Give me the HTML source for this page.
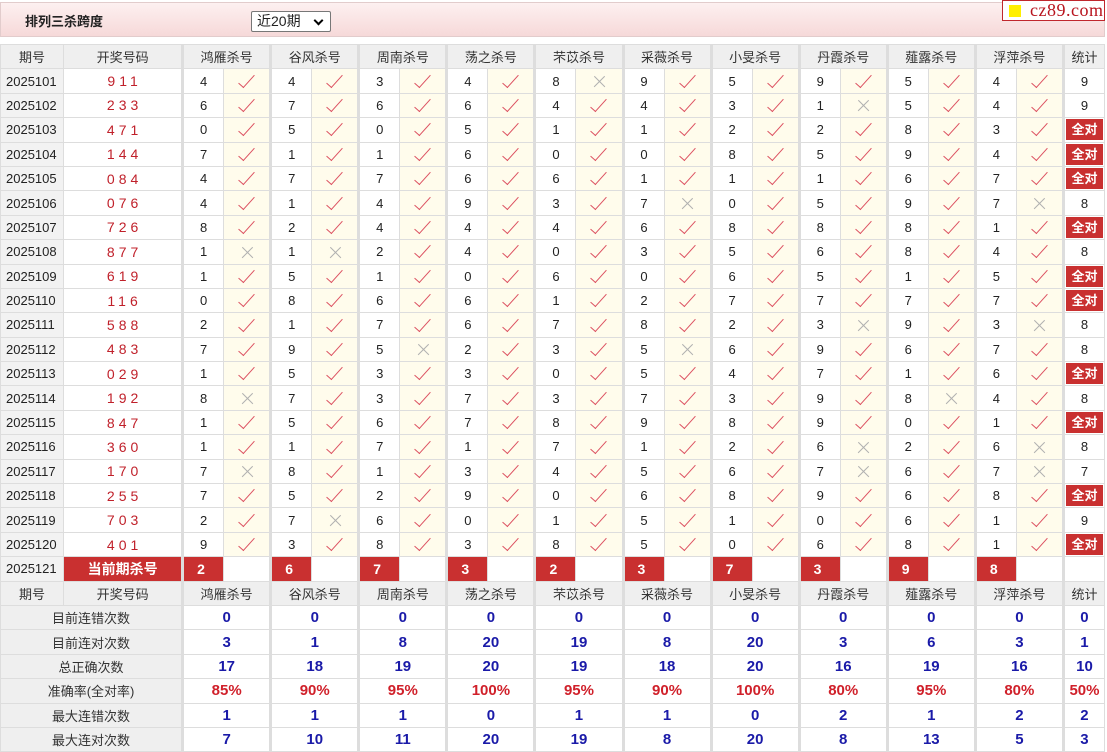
<!DOCTYPE html>
<html><head><meta charset="utf-8">
<style>
*{margin:0;padding:0;box-sizing:border-box}
body{width:1107px;height:752px;overflow:hidden;background:#fff;font-family:"Liberation Sans","Noto Sans CJK SC",sans-serif;font-size:13px;color:#222;position:relative}
.top{position:absolute;left:0;top:2px;width:1105px;height:35px;background:linear-gradient(#fdf0f0,#f6d9d9);border:1px solid #e2cccc}
.top .t{position:absolute;left:24px;top:8px;font-weight:bold;font-size:13px;color:#222}
.sel{position:absolute;left:250px;top:8px;width:80px;height:21px;border:1px solid #777;background:#fff;font-size:14px;padding-left:5px;line-height:19px;border-radius:2px}
.sel:after{content:"";position:absolute;right:8px;top:5px;width:5px;height:5px;border-right:2px solid #000;border-bottom:2px solid #000;transform:rotate(45deg)}
.logo{position:absolute;left:1002px;top:0;width:103px;height:21px;border:1px solid #c0272d;background:#fff;font-family:"Liberation Serif",serif;font-size:18px;color:#b8141e;line-height:19px;padding-left:27px;letter-spacing:0.5px}
.logo:before{content:"";position:absolute;left:6px;top:4px;width:12px;height:12px;background:#ffef00}
table{position:absolute;left:0;top:44px;border-collapse:collapse;table-layout:fixed;width:1105px}
td{border:1px solid #ddd;height:24.4px;text-align:center;padding:0;white-space:nowrap;overflow:hidden}
tr.h td{background:#efefef;font-size:13px;color:#333}
td.q{background:#f2f2f2;text-align:left;padding-left:5px}
td.k{color:#c0202a;letter-spacing:4px;font-size:14px;padding-left:4px}
td.n{border-left:3px solid #ddd}
td.y{background:#fffcec;position:relative}
td.g{border-left:3px solid #ddd}
.v{display:inline-block;width:7px;height:17px;border-right:1.6px solid #dc5060;border-bottom:1.6px solid #dc5060;transform:rotate(42deg);margin-top:-6px;vertical-align:middle}
.x{display:inline-block;width:14px;height:14px;position:relative;vertical-align:middle}
.x:before,.x:after{content:"";position:absolute;left:0;top:6px;width:15px;height:1.3px;background:#b0b0b0;transform:rotate(45deg)}
.x:after{transform:rotate(-45deg)}
.a{display:block;margin:1px 1px;height:21px;line-height:21px;background:#c93030;color:#fff;font-weight:bold;font-size:13px}
td.r{background:#c93030;color:#fff;font-weight:bold;font-size:14px}
td.r2{background:#c93030;color:#fff;font-weight:bold;font-size:14px;text-align:left;padding-left:13px}
td.l{background:#efefef;color:#333}
td.b{color:#1a1aa8;font-weight:bold;font-size:15px}
td.p{color:#d0202a;font-weight:bold;font-size:15px}
</style></head><body>
<div class="top"><span class="t">排列三杀跨度</span><div class="sel">近20期</div></div>
<div class="logo">cz89.com</div>
<table>
<colgroup><col style="width:63px"><col style="width:119px"><col style="width:41px"><col style="width:47px"><col style="width:41px"><col style="width:47px"><col style="width:41px"><col style="width:47px"><col style="width:41px"><col style="width:47px"><col style="width:41px"><col style="width:47px"><col style="width:41px"><col style="width:47px"><col style="width:41px"><col style="width:47px"><col style="width:41px"><col style="width:47px"><col style="width:41px"><col style="width:47px"><col style="width:41px"><col style="width:47px"><col style="width:41px"></colgroup>
<tr class="h"><td>期号</td><td>开奖号码</td><td colspan="2" class="g">鸿雁杀号</td><td colspan="2" class="g">谷风杀号</td><td colspan="2" class="g">周南杀号</td><td colspan="2" class="g">荡之杀号</td><td colspan="2" class="g">芣苡杀号</td><td colspan="2" class="g">采薇杀号</td><td colspan="2" class="g">小旻杀号</td><td colspan="2" class="g">丹霞杀号</td><td colspan="2" class="g">薤露杀号</td><td colspan="2" class="g">浮萍杀号</td><td class="g">统计</td></tr>
<tr><td class="q">2025101</td><td class="k">911</td><td class="n">4</td><td class="y"><i class="v"></i></td><td class="n">4</td><td class="y"><i class="v"></i></td><td class="n">3</td><td class="y"><i class="v"></i></td><td class="n">4</td><td class="y"><i class="v"></i></td><td class="n">8</td><td class="y"><i class="x"></i></td><td class="n">9</td><td class="y"><i class="v"></i></td><td class="n">5</td><td class="y"><i class="v"></i></td><td class="n">9</td><td class="y"><i class="v"></i></td><td class="n">5</td><td class="y"><i class="v"></i></td><td class="n">4</td><td class="y"><i class="v"></i></td><td class="g">9</td></tr>
<tr><td class="q">2025102</td><td class="k">233</td><td class="n">6</td><td class="y"><i class="v"></i></td><td class="n">7</td><td class="y"><i class="v"></i></td><td class="n">6</td><td class="y"><i class="v"></i></td><td class="n">6</td><td class="y"><i class="v"></i></td><td class="n">4</td><td class="y"><i class="v"></i></td><td class="n">4</td><td class="y"><i class="v"></i></td><td class="n">3</td><td class="y"><i class="v"></i></td><td class="n">1</td><td class="y"><i class="x"></i></td><td class="n">5</td><td class="y"><i class="v"></i></td><td class="n">4</td><td class="y"><i class="v"></i></td><td class="g">9</td></tr>
<tr><td class="q">2025103</td><td class="k">471</td><td class="n">0</td><td class="y"><i class="v"></i></td><td class="n">5</td><td class="y"><i class="v"></i></td><td class="n">0</td><td class="y"><i class="v"></i></td><td class="n">5</td><td class="y"><i class="v"></i></td><td class="n">1</td><td class="y"><i class="v"></i></td><td class="n">1</td><td class="y"><i class="v"></i></td><td class="n">2</td><td class="y"><i class="v"></i></td><td class="n">2</td><td class="y"><i class="v"></i></td><td class="n">8</td><td class="y"><i class="v"></i></td><td class="n">3</td><td class="y"><i class="v"></i></td><td class="g"><span class="a">全对</span></td></tr>
<tr><td class="q">2025104</td><td class="k">144</td><td class="n">7</td><td class="y"><i class="v"></i></td><td class="n">1</td><td class="y"><i class="v"></i></td><td class="n">1</td><td class="y"><i class="v"></i></td><td class="n">6</td><td class="y"><i class="v"></i></td><td class="n">0</td><td class="y"><i class="v"></i></td><td class="n">0</td><td class="y"><i class="v"></i></td><td class="n">8</td><td class="y"><i class="v"></i></td><td class="n">5</td><td class="y"><i class="v"></i></td><td class="n">9</td><td class="y"><i class="v"></i></td><td class="n">4</td><td class="y"><i class="v"></i></td><td class="g"><span class="a">全对</span></td></tr>
<tr><td class="q">2025105</td><td class="k">084</td><td class="n">4</td><td class="y"><i class="v"></i></td><td class="n">7</td><td class="y"><i class="v"></i></td><td class="n">7</td><td class="y"><i class="v"></i></td><td class="n">6</td><td class="y"><i class="v"></i></td><td class="n">6</td><td class="y"><i class="v"></i></td><td class="n">1</td><td class="y"><i class="v"></i></td><td class="n">1</td><td class="y"><i class="v"></i></td><td class="n">1</td><td class="y"><i class="v"></i></td><td class="n">6</td><td class="y"><i class="v"></i></td><td class="n">7</td><td class="y"><i class="v"></i></td><td class="g"><span class="a">全对</span></td></tr>
<tr><td class="q">2025106</td><td class="k">076</td><td class="n">4</td><td class="y"><i class="v"></i></td><td class="n">1</td><td class="y"><i class="v"></i></td><td class="n">4</td><td class="y"><i class="v"></i></td><td class="n">9</td><td class="y"><i class="v"></i></td><td class="n">3</td><td class="y"><i class="v"></i></td><td class="n">7</td><td class="y"><i class="x"></i></td><td class="n">0</td><td class="y"><i class="v"></i></td><td class="n">5</td><td class="y"><i class="v"></i></td><td class="n">9</td><td class="y"><i class="v"></i></td><td class="n">7</td><td class="y"><i class="x"></i></td><td class="g">8</td></tr>
<tr><td class="q">2025107</td><td class="k">726</td><td class="n">8</td><td class="y"><i class="v"></i></td><td class="n">2</td><td class="y"><i class="v"></i></td><td class="n">4</td><td class="y"><i class="v"></i></td><td class="n">4</td><td class="y"><i class="v"></i></td><td class="n">4</td><td class="y"><i class="v"></i></td><td class="n">6</td><td class="y"><i class="v"></i></td><td class="n">8</td><td class="y"><i class="v"></i></td><td class="n">8</td><td class="y"><i class="v"></i></td><td class="n">8</td><td class="y"><i class="v"></i></td><td class="n">1</td><td class="y"><i class="v"></i></td><td class="g"><span class="a">全对</span></td></tr>
<tr><td class="q">2025108</td><td class="k">877</td><td class="n">1</td><td class="y"><i class="x"></i></td><td class="n">1</td><td class="y"><i class="x"></i></td><td class="n">2</td><td class="y"><i class="v"></i></td><td class="n">4</td><td class="y"><i class="v"></i></td><td class="n">0</td><td class="y"><i class="v"></i></td><td class="n">3</td><td class="y"><i class="v"></i></td><td class="n">5</td><td class="y"><i class="v"></i></td><td class="n">6</td><td class="y"><i class="v"></i></td><td class="n">8</td><td class="y"><i class="v"></i></td><td class="n">4</td><td class="y"><i class="v"></i></td><td class="g">8</td></tr>
<tr><td class="q">2025109</td><td class="k">619</td><td class="n">1</td><td class="y"><i class="v"></i></td><td class="n">5</td><td class="y"><i class="v"></i></td><td class="n">1</td><td class="y"><i class="v"></i></td><td class="n">0</td><td class="y"><i class="v"></i></td><td class="n">6</td><td class="y"><i class="v"></i></td><td class="n">0</td><td class="y"><i class="v"></i></td><td class="n">6</td><td class="y"><i class="v"></i></td><td class="n">5</td><td class="y"><i class="v"></i></td><td class="n">1</td><td class="y"><i class="v"></i></td><td class="n">5</td><td class="y"><i class="v"></i></td><td class="g"><span class="a">全对</span></td></tr>
<tr><td class="q">2025110</td><td class="k">116</td><td class="n">0</td><td class="y"><i class="v"></i></td><td class="n">8</td><td class="y"><i class="v"></i></td><td class="n">6</td><td class="y"><i class="v"></i></td><td class="n">6</td><td class="y"><i class="v"></i></td><td class="n">1</td><td class="y"><i class="v"></i></td><td class="n">2</td><td class="y"><i class="v"></i></td><td class="n">7</td><td class="y"><i class="v"></i></td><td class="n">7</td><td class="y"><i class="v"></i></td><td class="n">7</td><td class="y"><i class="v"></i></td><td class="n">7</td><td class="y"><i class="v"></i></td><td class="g"><span class="a">全对</span></td></tr>
<tr><td class="q">2025111</td><td class="k">588</td><td class="n">2</td><td class="y"><i class="v"></i></td><td class="n">1</td><td class="y"><i class="v"></i></td><td class="n">7</td><td class="y"><i class="v"></i></td><td class="n">6</td><td class="y"><i class="v"></i></td><td class="n">7</td><td class="y"><i class="v"></i></td><td class="n">8</td><td class="y"><i class="v"></i></td><td class="n">2</td><td class="y"><i class="v"></i></td><td class="n">3</td><td class="y"><i class="x"></i></td><td class="n">9</td><td class="y"><i class="v"></i></td><td class="n">3</td><td class="y"><i class="x"></i></td><td class="g">8</td></tr>
<tr><td class="q">2025112</td><td class="k">483</td><td class="n">7</td><td class="y"><i class="v"></i></td><td class="n">9</td><td class="y"><i class="v"></i></td><td class="n">5</td><td class="y"><i class="x"></i></td><td class="n">2</td><td class="y"><i class="v"></i></td><td class="n">3</td><td class="y"><i class="v"></i></td><td class="n">5</td><td class="y"><i class="x"></i></td><td class="n">6</td><td class="y"><i class="v"></i></td><td class="n">9</td><td class="y"><i class="v"></i></td><td class="n">6</td><td class="y"><i class="v"></i></td><td class="n">7</td><td class="y"><i class="v"></i></td><td class="g">8</td></tr>
<tr><td class="q">2025113</td><td class="k">029</td><td class="n">1</td><td class="y"><i class="v"></i></td><td class="n">5</td><td class="y"><i class="v"></i></td><td class="n">3</td><td class="y"><i class="v"></i></td><td class="n">3</td><td class="y"><i class="v"></i></td><td class="n">0</td><td class="y"><i class="v"></i></td><td class="n">5</td><td class="y"><i class="v"></i></td><td class="n">4</td><td class="y"><i class="v"></i></td><td class="n">7</td><td class="y"><i class="v"></i></td><td class="n">1</td><td class="y"><i class="v"></i></td><td class="n">6</td><td class="y"><i class="v"></i></td><td class="g"><span class="a">全对</span></td></tr>
<tr><td class="q">2025114</td><td class="k">192</td><td class="n">8</td><td class="y"><i class="x"></i></td><td class="n">7</td><td class="y"><i class="v"></i></td><td class="n">3</td><td class="y"><i class="v"></i></td><td class="n">7</td><td class="y"><i class="v"></i></td><td class="n">3</td><td class="y"><i class="v"></i></td><td class="n">7</td><td class="y"><i class="v"></i></td><td class="n">3</td><td class="y"><i class="v"></i></td><td class="n">9</td><td class="y"><i class="v"></i></td><td class="n">8</td><td class="y"><i class="x"></i></td><td class="n">4</td><td class="y"><i class="v"></i></td><td class="g">8</td></tr>
<tr><td class="q">2025115</td><td class="k">847</td><td class="n">1</td><td class="y"><i class="v"></i></td><td class="n">5</td><td class="y"><i class="v"></i></td><td class="n">6</td><td class="y"><i class="v"></i></td><td class="n">7</td><td class="y"><i class="v"></i></td><td class="n">8</td><td class="y"><i class="v"></i></td><td class="n">9</td><td class="y"><i class="v"></i></td><td class="n">8</td><td class="y"><i class="v"></i></td><td class="n">9</td><td class="y"><i class="v"></i></td><td class="n">0</td><td class="y"><i class="v"></i></td><td class="n">1</td><td class="y"><i class="v"></i></td><td class="g"><span class="a">全对</span></td></tr>
<tr><td class="q">2025116</td><td class="k">360</td><td class="n">1</td><td class="y"><i class="v"></i></td><td class="n">1</td><td class="y"><i class="v"></i></td><td class="n">7</td><td class="y"><i class="v"></i></td><td class="n">1</td><td class="y"><i class="v"></i></td><td class="n">7</td><td class="y"><i class="v"></i></td><td class="n">1</td><td class="y"><i class="v"></i></td><td class="n">2</td><td class="y"><i class="v"></i></td><td class="n">6</td><td class="y"><i class="x"></i></td><td class="n">2</td><td class="y"><i class="v"></i></td><td class="n">6</td><td class="y"><i class="x"></i></td><td class="g">8</td></tr>
<tr><td class="q">2025117</td><td class="k">170</td><td class="n">7</td><td class="y"><i class="x"></i></td><td class="n">8</td><td class="y"><i class="v"></i></td><td class="n">1</td><td class="y"><i class="v"></i></td><td class="n">3</td><td class="y"><i class="v"></i></td><td class="n">4</td><td class="y"><i class="v"></i></td><td class="n">5</td><td class="y"><i class="v"></i></td><td class="n">6</td><td class="y"><i class="v"></i></td><td class="n">7</td><td class="y"><i class="x"></i></td><td class="n">6</td><td class="y"><i class="v"></i></td><td class="n">7</td><td class="y"><i class="x"></i></td><td class="g">7</td></tr>
<tr><td class="q">2025118</td><td class="k">255</td><td class="n">7</td><td class="y"><i class="v"></i></td><td class="n">5</td><td class="y"><i class="v"></i></td><td class="n">2</td><td class="y"><i class="v"></i></td><td class="n">9</td><td class="y"><i class="v"></i></td><td class="n">0</td><td class="y"><i class="v"></i></td><td class="n">6</td><td class="y"><i class="v"></i></td><td class="n">8</td><td class="y"><i class="v"></i></td><td class="n">9</td><td class="y"><i class="v"></i></td><td class="n">6</td><td class="y"><i class="v"></i></td><td class="n">8</td><td class="y"><i class="v"></i></td><td class="g"><span class="a">全对</span></td></tr>
<tr><td class="q">2025119</td><td class="k">703</td><td class="n">2</td><td class="y"><i class="v"></i></td><td class="n">7</td><td class="y"><i class="x"></i></td><td class="n">6</td><td class="y"><i class="v"></i></td><td class="n">0</td><td class="y"><i class="v"></i></td><td class="n">1</td><td class="y"><i class="v"></i></td><td class="n">5</td><td class="y"><i class="v"></i></td><td class="n">1</td><td class="y"><i class="v"></i></td><td class="n">0</td><td class="y"><i class="v"></i></td><td class="n">6</td><td class="y"><i class="v"></i></td><td class="n">1</td><td class="y"><i class="v"></i></td><td class="g">9</td></tr>
<tr><td class="q">2025120</td><td class="k">401</td><td class="n">9</td><td class="y"><i class="v"></i></td><td class="n">3</td><td class="y"><i class="v"></i></td><td class="n">8</td><td class="y"><i class="v"></i></td><td class="n">3</td><td class="y"><i class="v"></i></td><td class="n">8</td><td class="y"><i class="v"></i></td><td class="n">5</td><td class="y"><i class="v"></i></td><td class="n">0</td><td class="y"><i class="v"></i></td><td class="n">6</td><td class="y"><i class="v"></i></td><td class="n">8</td><td class="y"><i class="v"></i></td><td class="n">1</td><td class="y"><i class="v"></i></td><td class="g"><span class="a">全对</span></td></tr>
<tr><td class="q">2025121</td><td class="r">当前期杀号</td><td class="n r2">2</td><td></td><td class="n r2">6</td><td></td><td class="n r2">7</td><td></td><td class="n r2">3</td><td></td><td class="n r2">2</td><td></td><td class="n r2">3</td><td></td><td class="n r2">7</td><td></td><td class="n r2">3</td><td></td><td class="n r2">9</td><td></td><td class="n r2">8</td><td></td><td class="g"></td></tr>
<tr class="h"><td>期号</td><td>开奖号码</td><td colspan="2" class="g">鸿雁杀号</td><td colspan="2" class="g">谷风杀号</td><td colspan="2" class="g">周南杀号</td><td colspan="2" class="g">荡之杀号</td><td colspan="2" class="g">芣苡杀号</td><td colspan="2" class="g">采薇杀号</td><td colspan="2" class="g">小旻杀号</td><td colspan="2" class="g">丹霞杀号</td><td colspan="2" class="g">薤露杀号</td><td colspan="2" class="g">浮萍杀号</td><td class="g">统计</td></tr>
<tr><td colspan="2" class="l">目前连错次数</td><td colspan="2" class="g b">0</td><td colspan="2" class="g b">0</td><td colspan="2" class="g b">0</td><td colspan="2" class="g b">0</td><td colspan="2" class="g b">0</td><td colspan="2" class="g b">0</td><td colspan="2" class="g b">0</td><td colspan="2" class="g b">0</td><td colspan="2" class="g b">0</td><td colspan="2" class="g b">0</td><td class="g b">0</td></tr>
<tr><td colspan="2" class="l">目前连对次数</td><td colspan="2" class="g b">3</td><td colspan="2" class="g b">1</td><td colspan="2" class="g b">8</td><td colspan="2" class="g b">20</td><td colspan="2" class="g b">19</td><td colspan="2" class="g b">8</td><td colspan="2" class="g b">20</td><td colspan="2" class="g b">3</td><td colspan="2" class="g b">6</td><td colspan="2" class="g b">3</td><td class="g b">1</td></tr>
<tr><td colspan="2" class="l">总正确次数</td><td colspan="2" class="g b">17</td><td colspan="2" class="g b">18</td><td colspan="2" class="g b">19</td><td colspan="2" class="g b">20</td><td colspan="2" class="g b">19</td><td colspan="2" class="g b">18</td><td colspan="2" class="g b">20</td><td colspan="2" class="g b">16</td><td colspan="2" class="g b">19</td><td colspan="2" class="g b">16</td><td class="g b">10</td></tr>
<tr><td colspan="2" class="l">准确率(全对率)</td><td colspan="2" class="g p">85%</td><td colspan="2" class="g p">90%</td><td colspan="2" class="g p">95%</td><td colspan="2" class="g p">100%</td><td colspan="2" class="g p">95%</td><td colspan="2" class="g p">90%</td><td colspan="2" class="g p">100%</td><td colspan="2" class="g p">80%</td><td colspan="2" class="g p">95%</td><td colspan="2" class="g p">80%</td><td class="g p">50%</td></tr>
<tr><td colspan="2" class="l">最大连错次数</td><td colspan="2" class="g b">1</td><td colspan="2" class="g b">1</td><td colspan="2" class="g b">1</td><td colspan="2" class="g b">0</td><td colspan="2" class="g b">1</td><td colspan="2" class="g b">1</td><td colspan="2" class="g b">0</td><td colspan="2" class="g b">2</td><td colspan="2" class="g b">1</td><td colspan="2" class="g b">2</td><td class="g b">2</td></tr>
<tr><td colspan="2" class="l">最大连对次数</td><td colspan="2" class="g b">7</td><td colspan="2" class="g b">10</td><td colspan="2" class="g b">11</td><td colspan="2" class="g b">20</td><td colspan="2" class="g b">19</td><td colspan="2" class="g b">8</td><td colspan="2" class="g b">20</td><td colspan="2" class="g b">8</td><td colspan="2" class="g b">13</td><td colspan="2" class="g b">5</td><td class="g b">3</td></tr>
</table>
</body></html>
